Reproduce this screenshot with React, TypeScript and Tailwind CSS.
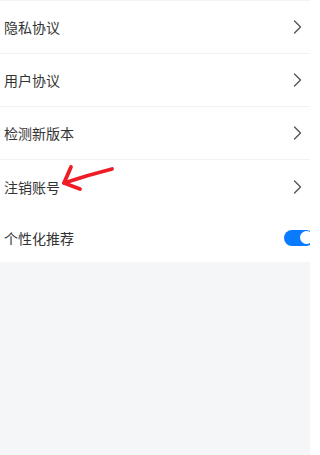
import React from 'react';

const rows = ['隐私协议', '用户协议', '检测新版本', '注销账号'];

function Chevron() {
    return (
        <svg width="9" height="14" viewBox="0 0 9 14" className="shrink-0">
            <polyline points="1.5,1 7.5,7 1.5,13" fill="none" stroke="#555" strokeWidth="1.4" strokeLinecap="round" strokeLinejoin="round" />
        </svg>
    );
}

export default function App() {
    return (
        <div className="relative w-[310px] h-[455px] bg-[#f5f6f8] overflow-hidden" style={{ fontFamily: '"Noto Sans CJK SC", "Noto Sans", sans-serif' }}>
            <div className="bg-white border-t border-[#f4f4f4]">
                {rows.map((label, i) => (
                    <div
                        key={label}
                        className={i < rows.length - 1
                            ? 'h-[53px] flex items-center justify-between pl-[4px] pr-[8px] border-b border-[#f2f2f2]'
                            : 'h-[53px] flex items-center justify-between pl-[4px] pr-[8px]'}
                    >
                        <span className="text-[14px] text-[#333] leading-none">{label}</span>
                        <Chevron />
                    </div>
                ))}
                {/* Personalised recommendation */}
                <div className="h-[49px] flex items-center justify-between pl-[4px]">
                    <span className="text-[14px] text-[#333] leading-none">个性化推荐</span>
                    <div className="w-[30px] h-[16px] mr-[-4px] rounded-full bg-[#0a7bff] flex items-center justify-end px-[1.5px]">
                        <div className="w-[13px] h-[13px] rounded-full bg-white" />
                    </div>
                </div>
            </div>

            {/* Red annotation arrow */}
            <svg className="absolute left-0 top-0 pointer-events-none" width="310" height="455">
                <g fill="none" stroke="#ee1c24" strokeWidth="3.8" strokeLinecap="round" strokeLinejoin="round">
                    <path d="M112 169 Q88 175 64 183" />
                    <path d="M71 167 L64 183 L80 189" />
                </g>
            </svg>
        </div>
    );
}
